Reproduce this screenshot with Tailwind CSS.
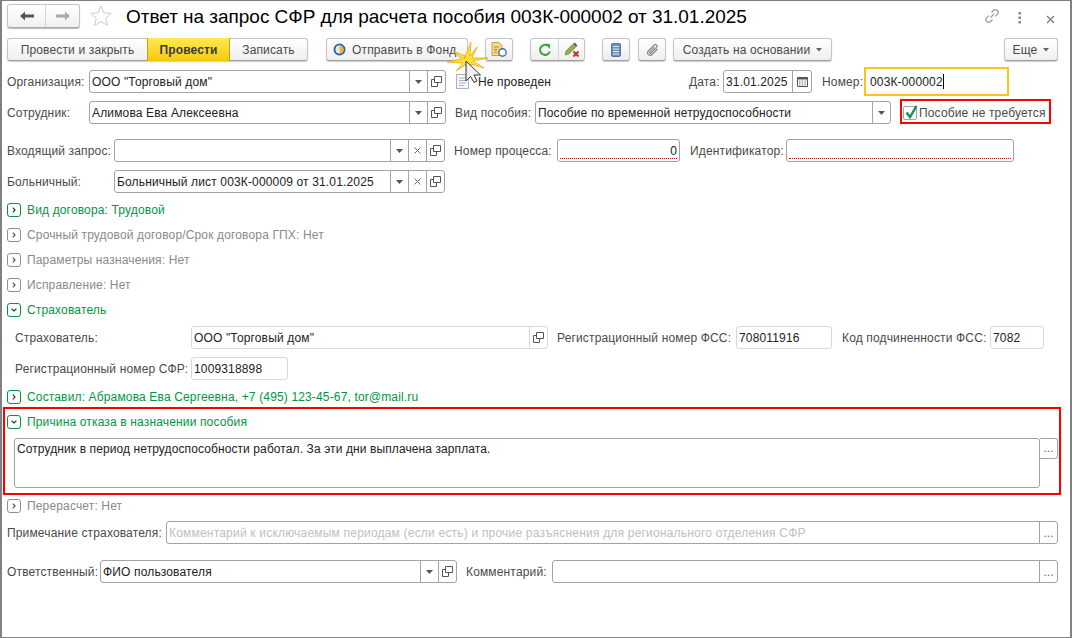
<!DOCTYPE html>
<html><head><meta charset="utf-8"><script src="https://cdn.jsdelivr.net/npm/@tailwindcss/browser@4"></script></head>
<body class="bg-white">
<div class="relative w-[1072px] h-[638px] overflow-hidden bg-white border-x-2 border-y border-[#808080] font-['Liberation_Sans',Arial,sans-serif] text-[12px] tracking-[0.15px] text-[#4a4a4a] whitespace-nowrap">

<!-- title -->
<div class="flex items-center h-[24px] mt-[3px] pl-[5px]">
  <div class="flex w-[73px] h-[24px] rounded-[3px] border border-[#c4c4c4] border-b-[#a8a8a8] bg-linear-to-b from-white to-[#f0f0f0] shadow-[0_1px_1px_#bbb] shrink-0">
    <div class="w-[38px] flex items-center justify-center border-r border-[#d8d8d8]"><svg width="14" height="10" viewBox="0 0 14 10"><path d="M0 5l5-4.500v3h9v3h-9v3z" fill="#555"/></svg></div>
    <div class="flex-1 flex items-center justify-center"><svg width="14" height="10" viewBox="0 0 14 10"><path d="M14 5l-5-4.500v3h-9v3h9v3z" fill="#aaa"/></svg></div>
  </div>
  <svg class="ml-[10px] shrink-0" width="22" height="22" viewBox="0 0 22 22"><path d="M11 1l2.900 6.800 7.300.6-5.500 4.800 1.700 7.200L11 16.600l-6.400 3.800 1.700-7.200L.8 8.400l7.300-.6z" fill="#fff" stroke="#c6cdd2"/></svg>
  <div class="ml-[14px] w-[858px] pt-[1px] text-[19px] tracking-[-0.03px] text-black leading-[24px]">Ответ на запрос СФР для расчета пособия 003К-000002 от 31.01.2025</div>
  <svg class="shrink-0" width="16" height="16" viewBox="0 0 16 16" fill="none" stroke="#9a9a9a" stroke-width="1.200"><path d="M6.500 9.500l3.500-3.500"/><path d="M7.500 4.500l2-2a2.600 2.600 0 0 1 3.800 3.800l-2 2"/><path d="M8.500 11.500l-2 2a2.600 2.600 0 0 1-3.800-3.800l2-2"/></svg>
</div>
<svg class="absolute left-[1016px] top-[10px]" width="4" height="14" viewBox="0 0 4 14"><rect x="0.500" y="1" width="2.500" height="2.500" fill="#888"/><rect x="0.500" y="5.500" width="2.500" height="2.500" fill="#888"/><rect x="0.500" y="10" width="2.500" height="2.500" fill="#888"/></svg>
<svg class="absolute left-[1044px] top-[14px]" width="9" height="9" viewBox="0 0 9 9"><path d="M1 1l7 7M8 1l-7 7" stroke="#777" stroke-width="1.100"/></svg>

<!-- command bar -->
<div class="flex items-center h-[23px] mt-[10px] pl-[5px]">
  <div class="flex w-[301px] h-[23px] shrink-0 rounded-[3px] border border-[#c4c4c4] border-b-[#a0a0a0] bg-linear-to-b from-white to-[#eeeeee] shadow-[0_1px_1px_#ccc]">
    <div class="w-[139px] flex items-center justify-center">Провести и закрыть</div>
    <div class="w-[83px] flex items-center justify-center font-bold text-[#3a3a3a] bg-linear-to-b from-[#ffe94d] to-[#f2cb00] border-x border-[#bfa020] -my-px">Провести</div>
    <div class="flex-1 flex items-center justify-center">Записать</div>
  </div>
  <div class="ml-[18px] flex w-[142px] h-[23px] shrink-0 items-center rounded-[3px] border border-[#c4c4c4] border-b-[#a0a0a0] bg-linear-to-b from-white to-[#eeeeee] shadow-[0_1px_1px_#ccc]">
    <svg class="ml-[6px]" width="13" height="13" viewBox="0 0 13 13"><circle cx="6.500" cy="6.500" r="5" fill="none" stroke="#2f62a8" stroke-width="2"/><path d="M6.500 2.500a4 4 0 0 1 1 7.800l-1-1z" fill="#f2b705"/><path d="M6.500 2.500a4 4 0 0 0-1.500 7.500z" fill="#dfe6f0"/></svg>
    <span class="ml-[6px]">Отправить в Фонд</span>
  </div>
  <div class="ml-[17px] flex w-[28px] h-[23px] shrink-0 items-center justify-center rounded-[3px] border border-[#c4c4c4] border-b-[#a0a0a0] bg-linear-to-b from-white to-[#eeeeee] shadow-[0_1px_1px_#ccc]">
    <svg width="18" height="17" viewBox="0 0 18 17"><path d="M2 1.500h7l3 3v10H2z" fill="#f5d98a" stroke="#c9a14a"/><path d="M4 6h5M4 8.500h3M4 11h3" stroke="#b58a30"/><circle cx="12.500" cy="11.500" r="3.700" fill="#fff" stroke="#3f6f9f" stroke-width="1.400"/></svg>
  </div>
  <div class="ml-[17px] flex w-[55px] h-[23px] shrink-0 rounded-[3px] border border-[#c4c4c4] border-b-[#a0a0a0] bg-linear-to-b from-white to-[#eeeeee] shadow-[0_1px_1px_#ccc]">
    <div class="w-[28px] flex items-center justify-center border-r border-[#d4d4d4]"><svg width="14" height="14" viewBox="0 0 14 14" fill="none"><path d="M11.800 8.500A5 5 0 1 1 10 2.800" stroke="#3aa63a" stroke-width="2"/><path d="M8 0.500l4.500 1-1 4.500z" fill="#3aa63a"/></svg></div>
    <div class="flex-1 flex items-center justify-center"><svg width="16" height="15" viewBox="0 0 16 15"><path d="M1 13l1-4 6.500-6.500 3 3L5 12z" fill="#8fb04a" stroke="#6b7f3a" stroke-width="0.600"/><path d="M9 2l1.500-1.500 3 3L12 5z" fill="#555"/><path d="M9.500 9.500l5 5M14.500 9.500l-5 5" stroke="#d02a2a" stroke-width="2"/></svg></div>
  </div>
  <div class="ml-[17px] flex w-[28px] h-[23px] shrink-0 items-center justify-center rounded-[3px] border border-[#c4c4c4] border-b-[#a0a0a0] bg-linear-to-b from-white to-[#eeeeee] shadow-[0_1px_1px_#ccc]">
    <svg width="10" height="14" viewBox="0 0 10 14"><rect x="0.500" y="0.500" width="9" height="13" rx="1" fill="#6d8fb5" stroke="#54779f"/><path d="M2 3.500h6M2 6h6M2 8.500h6M2 11h6" stroke="#dfe8f2"/></svg>
  </div>
  <div class="ml-[8px] flex w-[28px] h-[23px] shrink-0 items-center justify-center rounded-[3px] border border-[#c4c4c4] border-b-[#a0a0a0] bg-linear-to-b from-white to-[#eeeeee] shadow-[0_1px_1px_#ccc]">
    <svg width="13" height="14" viewBox="0 0 13 14" fill="none" stroke="#8a8a8a" stroke-width="1.200"><path d="M11.500 6l-5.500 5.500a2.500 2.500 0 0 1-3.700-3.500l6-6a1.700 1.700 0 0 1 2.400 2.400l-5.800 5.800a.8.800 0 0 1-1.200-1.100l5-5"/></svg>
  </div>
  <div class="ml-[7px] flex w-[159px] h-[23px] shrink-0 items-center justify-center rounded-[3px] border border-[#c4c4c4] border-b-[#a0a0a0] bg-linear-to-b from-white to-[#eeeeee] shadow-[0_1px_1px_#ccc]">
    <span>Создать на основании</span><svg class="ml-[6px]" width="6" height="4" viewBox="0 0 6 4"><path d="M0 0h6L3 3.500z" fill="#666"/></svg>
  </div>
  <div class="ml-[172px] flex w-[54px] h-[23px] shrink-0 items-center justify-center rounded-[3px] border border-[#c4c4c4] border-b-[#a0a0a0] bg-linear-to-b from-white to-[#eeeeee] shadow-[0_1px_1px_#ccc]">
    <span>Еще</span><svg class="ml-[6px]" width="6" height="4" viewBox="0 0 6 4"><path d="M0 0h6L3 3.500z" fill="#666"/></svg>
  </div>
</div>

<!-- row 1 -->
<div class="flex items-center h-[23px] mt-[9px] pl-[5px]">
  <div class="w-[82px] shrink-0">Организация:</div>
  <div class="flex items-center w-[357px] h-[23px] shrink-0 border border-[#a3a3a3] rounded-[3px]">
    <div class="flex-1 pl-[2px] text-[#222]">ООО "Торговый дом"</div>
    <div class="w-[18px] h-full flex items-center justify-center border-l border-[#a3a3a3]"><svg width="7" height="4" viewBox="0 0 7 4"><path d="M0 0h7L3.500 4z" fill="#555"/></svg></div>
    <div class="w-[18px] h-full flex items-center justify-center border-l border-[#a3a3a3]"><svg width="11" height="11" viewBox="0 0 11 11" fill="none" stroke="#555"><path d="M3.500.5h7v6h-7zM3.500 3.500h-3v7h6v-4"/></svg></div>
  </div>
  <svg class="ml-[10px] shrink-0" width="13" height="15" viewBox="0 0 13 15"><path d="M.5.5h12v14H.5z" fill="#f4f6f9" stroke="#a9b0bb"/><path d="M3 4h7M3 6.500h7M3 9h7M3 11.500h5" stroke="#aab4c2"/></svg>
  <div class="ml-[9px] w-[211px] shrink-0 text-[#222]">Не проведен</div>
  <div class="w-[34px] shrink-0">Дата:</div>
  <div class="flex items-center w-[89px] h-[23px] shrink-0 border border-[#a3a3a3] rounded-[3px]">
    <div class="flex-1 pl-[2px] text-[#222]">31.01.2025</div>
    <div class="w-[19px] h-full flex items-center justify-center border-l border-[#a3a3a3]"><svg width="11" height="11" viewBox="0 0 11 11"><path d="M.5 1.500h10v9H.5z" fill="none" stroke="#555"/><path d="M.5 1.500h10v2H.5z" fill="#555"/><path d="M2 5h1.500M4.700 5h1.500M7.500 5H9M2 7h1.500M4.700 7h1.500M7.500 7H9M2 9h1.500M4.700 9h1.500M7.500 9H9" stroke="#777"/></svg></div>
  </div>
  <div class="ml-[10px] w-[47px] shrink-0">Номер:</div>
  <div class="text-[#222] flex items-center ml-[1px]">003К-000002<span class="inline-block w-px h-[15px] bg-black"></span></div>
</div>

<!-- row 2 -->
<div class="flex items-center h-[23px] mt-[8px] pl-[5px]">
  <div class="w-[82px] shrink-0">Сотрудник:</div>
  <div class="flex items-center w-[357px] h-[23px] shrink-0 border border-[#a3a3a3] rounded-[3px]">
    <div class="flex-1 pl-[2px] text-[#222]">Алимова Ева Алексеевна</div>
    <div class="w-[18px] h-full flex items-center justify-center border-l border-[#a3a3a3]"><svg width="7" height="4" viewBox="0 0 7 4"><path d="M0 0h7L3.500 4z" fill="#555"/></svg></div>
    <div class="w-[18px] h-full flex items-center justify-center border-l border-[#a3a3a3]"><svg width="11" height="11" viewBox="0 0 11 11" fill="none" stroke="#555"><path d="M3.500.5h7v6h-7zM3.500 3.500h-3v7h6v-4"/></svg></div>
  </div>
  <div class="ml-[9px] w-[80px] shrink-0">Вид пособия:</div>
  <div class="flex items-center w-[356px] h-[23px] shrink-0 border border-[#a3a3a3] rounded-[3px]">
    <div class="flex-1 pl-[2px] text-[#222]">Пособие по временной нетрудоспособности</div>
    <div class="w-[18px] h-full flex items-center justify-center border-l border-[#a3a3a3]"><svg width="7" height="4" viewBox="0 0 7 4"><path d="M0 0h7L3.500 4z" fill="#555"/></svg></div>
  </div>
  <div class="ml-[12px] w-[14px] h-[14px] shrink-0 border border-[#a3a3a3] rounded-[2px] relative"><svg class="absolute -top-[3px] left-0" width="15" height="16" viewBox="0 0 15 16" fill="none"><path d="M2.500 8.500l3.500 4.500 6.500-11" stroke="#14924a" stroke-width="2.400"/></svg></div>
  <div class="ml-[2px]">Пособие не требуется</div>
</div>

<!-- row 3 -->
<div class="flex items-center h-[23px] mt-[15px] pl-[5px]">
  <div class="w-[107px] shrink-0">Входящий запрос:</div>
  <div class="flex items-center w-[331px] h-[23px] shrink-0 border border-[#a3a3a3] rounded-[3px]">
    <div class="flex-1"></div>
    <div class="w-[18px] h-full flex items-center justify-center border-l border-[#a3a3a3]"><svg width="7" height="4" viewBox="0 0 7 4"><path d="M0 0h7L3.500 4z" fill="#555"/></svg></div>
    <div class="w-[18px] h-full flex items-center justify-center border-l border-[#a3a3a3]"><svg width="7" height="7" viewBox="0 0 7 7"><path d="M.5.5l6 6M6.500.5l-6 6" stroke="#666"/></svg></div>
    <div class="w-[18px] h-full flex items-center justify-center border-l border-[#a3a3a3]"><svg width="11" height="11" viewBox="0 0 11 11" fill="none" stroke="#555"><path d="M3.500.5h7v6h-7zM3.500 3.500h-3v7h6v-4"/></svg></div>
  </div>
  <div class="ml-[9px] w-[103px] shrink-0">Номер процесса:</div>
  <div class="relative flex items-center justify-end w-[123px] h-[23px] shrink-0 border border-[#a3a3a3] rounded-[3px] pr-[2px] text-[#222]">0<div class="absolute left-[2px] right-[2px] bottom-[2px] border-b border-dotted border-[#e00000]"></div></div>
  <div class="ml-[10px] w-[96px] shrink-0">Идентификатор:</div>
  <div class="relative w-[228px] h-[23px] shrink-0 border border-[#a3a3a3] rounded-[3px]"><div class="absolute left-[2px] right-[2px] bottom-[2px] border-b border-dotted border-[#e00000]"></div></div>
</div>

<!-- row 4 -->
<div class="flex items-center h-[23px] mt-[8px] pl-[5px]">
  <div class="w-[107px] shrink-0">Больничный:</div>
  <div class="flex items-center w-[331px] h-[23px] shrink-0 border border-[#a3a3a3] rounded-[3px]">
    <div class="flex-1 pl-[2px] text-[#222]">Больничный лист 003К-000009 от 31.01.2025</div>
    <div class="w-[18px] h-full flex items-center justify-center border-l border-[#a3a3a3]"><svg width="7" height="4" viewBox="0 0 7 4"><path d="M0 0h7L3.500 4z" fill="#555"/></svg></div>
    <div class="w-[18px] h-full flex items-center justify-center border-l border-[#a3a3a3]"><svg width="7" height="7" viewBox="0 0 7 7"><path d="M.5.5l6 6M6.500.5l-6 6" stroke="#666"/></svg></div>
    <div class="w-[18px] h-full flex items-center justify-center border-l border-[#a3a3a3]"><svg width="11" height="11" viewBox="0 0 11 11" fill="none" stroke="#555"><path d="M3.500.5h7v6h-7zM3.500 3.500h-3v7h6v-4"/></svg></div>
  </div>
</div>

<!-- groups -->
<div class="flex items-center gap-[6px] h-[25px] mt-[4px] pl-[5px] text-[#009644]">
  <div class="w-[14px] h-[14px] rounded-[3px] border border-[#009644] flex items-center justify-center"><svg width="4" height="6" viewBox="0 0 4 6" fill="none"><path d="M.8.6L3 3 .8 5.400" stroke="#333" stroke-width="1.200"/></svg></div>Вид договора: Трудовой
</div>
<div class="flex items-center gap-[6px] h-[25px] pl-[5px] text-[#8a8a8a]">
  <div class="w-[14px] h-[14px] rounded-[3px] border border-[#8f8f8f] flex items-center justify-center"><svg width="4" height="6" viewBox="0 0 4 6" fill="none"><path d="M.8.6L3 3 .8 5.400" stroke="#555" stroke-width="1.200"/></svg></div>Срочный трудовой договор/Срок договора ГПХ: Нет
</div>
<div class="flex items-center gap-[6px] h-[25px] pl-[5px] text-[#8a8a8a]">
  <div class="w-[14px] h-[14px] rounded-[3px] border border-[#8f8f8f] flex items-center justify-center"><svg width="4" height="6" viewBox="0 0 4 6" fill="none"><path d="M.8.6L3 3 .8 5.400" stroke="#555" stroke-width="1.200"/></svg></div>Параметры назначения: Нет
</div>
<div class="flex items-center gap-[6px] h-[25px] pl-[5px] text-[#8a8a8a]">
  <div class="w-[14px] h-[14px] rounded-[3px] border border-[#8f8f8f] flex items-center justify-center"><svg width="4" height="6" viewBox="0 0 4 6" fill="none"><path d="M.8.6L3 3 .8 5.400" stroke="#555" stroke-width="1.200"/></svg></div>Исправление: Нет
</div>
<div class="flex items-center gap-[6px] h-[25px] pl-[5px] text-[#009644]">
  <div class="w-[14px] h-[14px] rounded-[3px] border border-[#009644] flex items-center justify-center"><svg width="6" height="4" viewBox="0 0 6 4" fill="none"><path d="M.6.8L3 3 5.400.8" stroke="#333" stroke-width="1.200"/></svg></div>Страхователь
</div>

<!-- insurer -->
<div class="flex items-center h-[23px] mt-[4px] pl-[13px]">
  <div class="w-[176px] shrink-0">Страхователь:</div>
  <div class="flex items-center w-[357px] h-[23px] shrink-0 border border-[#d8d8d8] rounded-[3px]">
    <div class="flex-1 pl-[2px] text-[#222]">ООО "Торговый дом"</div>
    <div class="w-[18px] h-full flex items-center justify-center border-l border-[#d8d8d8]"><svg width="11" height="11" viewBox="0 0 11 11" fill="none" stroke="#555"><path d="M3.500.5h7v6h-7zM3.500 3.500h-3v7h6v-4"/></svg></div>
  </div>
  <div class="ml-[9px] w-[179px] shrink-0">Регистрационный номер ФСС:</div>
  <div class="flex items-center w-[96px] h-[23px] shrink-0 border border-[#d8d8d8] rounded-[3px] pl-[2px] text-[#222]">708011916</div>
  <div class="ml-[10px] w-[148px] shrink-0">Код подчиненности ФСС:</div>
  <div class="flex items-center w-[54px] h-[23px] shrink-0 border border-[#d8d8d8] rounded-[3px] pl-[2px] text-[#222]">7082</div>
</div>
<div class="flex items-center h-[23px] mt-[8px] pl-[13px]">
  <div class="w-[176px] shrink-0">Регистрационный номер СФР:</div>
  <div class="flex items-center w-[97px] h-[23px] shrink-0 border border-[#d8d8d8] rounded-[3px] pl-[2px] text-[#222]">1009318898</div>
</div>

<div class="flex items-center gap-[6px] h-[25px] mt-[4px] pl-[5px] text-[#009644]">
  <div class="w-[14px] h-[14px] rounded-[3px] border border-[#009644] flex items-center justify-center"><svg width="4" height="6" viewBox="0 0 4 6" fill="none"><path d="M.8.6L3 3 .8 5.400" stroke="#333" stroke-width="1.200"/></svg></div>Составил: Абрамова Ева Сергеевна, +7 (495) 123-45-67, tor@mail.ru
</div>
<div class="flex items-center gap-[6px] h-[25px] pl-[5px] text-[#009644]">
  <div class="w-[14px] h-[14px] rounded-[3px] border border-[#009644] flex items-center justify-center"><svg width="6" height="4" viewBox="0 0 6 4" fill="none"><path d="M.6.8L3 3 5.400.8" stroke="#333" stroke-width="1.200"/></svg></div>Причина отказа в назначении пособия
</div>

<!-- textarea -->
<div class="flex items-start h-[50px] mt-[4px] pl-[12px]">
  <div class="w-[1026px] h-[50px] shrink-0 border border-[#a3a3a3] rounded-[3px] pl-[2px] pt-[3px] leading-[15px] tracking-[0.1px] text-[#222]">Сотрудник в период нетрудоспособности работал. За эти дни выплачена зарплата.</div>
  <div class="w-[18px] h-[21px] shrink-0 border border-l-0 border-[#a3a3a3] rounded-r-[3px] flex items-center justify-center text-[#666] pb-[1px] tracking-normal">...</div>
</div>

<div class="flex items-center gap-[6px] h-[25px] mt-[5px] pl-[5px] text-[#8a8a8a]">
  <div class="w-[14px] h-[14px] rounded-[3px] border border-[#8f8f8f] flex items-center justify-center"><svg width="4" height="6" viewBox="0 0 4 6" fill="none"><path d="M.8.6L3 3 .8 5.400" stroke="#555" stroke-width="1.200"/></svg></div>Перерасчет: Нет
</div>

<div class="flex items-center h-[23px] mt-[3px] pl-[5px]">
  <div class="w-[159px] shrink-0">Примечание страхователя:</div>
  <div class="flex items-center w-[892px] h-[23px] shrink-0 border border-[#a3a3a3] rounded-[3px]">
    <div class="flex-1 pl-[2px] tracking-[0.2px] text-[#c0c0c0]">Комментарий к исключаемым периодам (если есть) и прочие разъяснения для регионального отделения СФР</div>
    <div class="w-[18px] h-full flex items-center justify-center border-l border-[#a3a3a3] text-[#666] tracking-normal">...</div>
  </div>
</div>

<div class="flex items-center h-[23px] mt-[16px] pl-[5px]">
  <div class="w-[93px] shrink-0">Ответственный:</div>
  <div class="flex items-center w-[357px] h-[23px] shrink-0 border border-[#a3a3a3] rounded-[3px]">
    <div class="flex-1 pl-[2px] text-[#222]">ФИО пользователя</div>
    <div class="w-[18px] h-full flex items-center justify-center border-l border-[#a3a3a3]"><svg width="7" height="4" viewBox="0 0 7 4"><path d="M0 0h7L3.500 4z" fill="#555"/></svg></div>
    <div class="w-[18px] h-full flex items-center justify-center border-l border-[#a3a3a3]"><svg width="11" height="11" viewBox="0 0 11 11" fill="none" stroke="#555"><path d="M3.500.5h7v6h-7zM3.500 3.500h-3v7h6v-4"/></svg></div>
  </div>
  <div class="ml-[9px] w-[86px] shrink-0">Комментарий:</div>
  <div class="flex items-center w-[506px] h-[23px] shrink-0 border border-[#a3a3a3] rounded-[3px]">
    <div class="flex-1"></div>
    <div class="w-[18px] h-full flex items-center justify-center border-l border-[#a3a3a3] text-[#666] tracking-normal">...</div>
  </div>
</div>

<!-- annotations over content -->
<div class="absolute left-[862px] top-[66px] w-[145px] h-[29px] border-2 border-[#fcc31e]"></div>
<div class="absolute left-[898px] top-[98px] w-[151px] h-[25px] border-2 border-[#ff0000]"></div>
<div class="absolute left-[1px] top-[406px] w-[1058px] h-[88px] border-2 border-[#ff0000]"></div>

<!-- cursor with burst -->
<svg class="absolute left-[442px] top-[37px]" width="50" height="50" viewBox="0 0 50 50">
  <path d="M20 21 L27 4 L26 18 L33 9 L28 20 L44 20 L29 23 L40 30 L27 26 L26 36 L23 26 L12 33 L19 25 L3 24 L18 21 L9 13 L21 18 Z" fill="#ffe13a" stroke="#e8a80c" stroke-width="0.800"/>
  <path d="M22 23 L22 43 L26.500 38.500 L30 44.500 L33 43 L30 37 L36.500 37 Z" fill="#f0f0f0" stroke="#333" stroke-width="1"/>
</svg>
</div>
</body></html>
